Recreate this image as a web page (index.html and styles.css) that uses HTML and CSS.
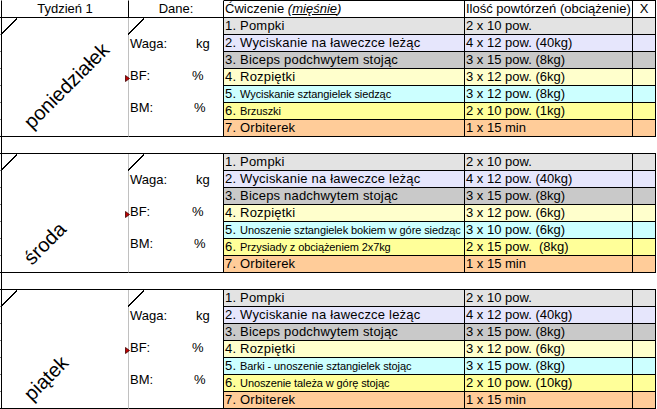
FILE: index.html
```html
<!DOCTYPE html>
<html lang="pl">
<head>
<meta charset="utf-8">
<title>Tydzień 1</title>
<link rel="stylesheet" href="styles.css">
</head>
<body>
<div class="sheet">
  <!-- header -->
  <div class="a a-end"></div>
  <div class="h h-week">Tydzień 1</div>
  <div class="h h-data">Dane:</div>
  <div class="h h-ex">Ćwiczenie <i>(<u>mięśnie</u>)</i></div>
  <div class="h h-reps">Ilość powtórzeń (obciążenie)</div>
  <div class="h h-x">X</div>
  <div class="z"></div>

  <!-- poniedziałek -->
  <div class="a"></div>
  <div class="week">
    <svg class="diag" width="17" height="17" viewBox="0 0 17 17"><line x1="0" y1="16.5" x2="16" y2="0.5" stroke="#000" stroke-width="1"/></svg>
    <span class="day">poniedziałek</span>
  </div>
  <div class="data">
    <svg class="diag" width="17" height="17" viewBox="0 0 17 17"><line x1="0" y1="16.5" x2="16" y2="0.5" stroke="#000" stroke-width="1"/></svg>
    <div class="line"><span class="lbl lbl-kg">Waga:</span><span>kg</span></div>
    <div class="line"><svg class="marker" width="5" height="7" viewBox="0 0 5 7"><path d="M0.5 0.5 L4.5 3.5 L0.5 6.5 Z" fill="#c00000" stroke="#400000" stroke-width="0.8"/></svg><span class="lbl lbl-bf">BF:</span><span>%</span></div>
    <div class="line"><span class="lbl lbl-bm">BM:</span><span>%</span></div>
  </div>
  <div class="c ex r1">1. Pompki</div><div class="c reps r1">2 x 10 pow.</div><div class="c x r1"></div><div class="z"></div>
  <div class="a"></div><div class="c ex r2">2. Wyciskanie na ławeczce leżąc</div><div class="c reps r2">4 x 12 pow. (40kg)</div><div class="c x r2"></div><div class="z"></div>
  <div class="a"></div><div class="c ex r3">3. Biceps podchwytem stojąc</div><div class="c reps r3">3 x 15 pow. (8kg)</div><div class="c x r3"></div><div class="z"></div>
  <div class="a"></div><div class="c ex r4">4. Rozpiętki</div><div class="c reps r4">3 x 12 pow. (6kg)</div><div class="c x r4"></div><div class="z"></div>
  <div class="a"></div><div class="c ex r5">5. <span class="sm">Wyciskanie sztangielek siedząc</span></div><div class="c reps r5">3 x 12 pow. (8kg)</div><div class="c x r5"></div><div class="z"></div>
  <div class="a"></div><div class="c ex r6">6. <span class="sm">Brzuszki</span></div><div class="c reps r6">2 x 10 pow. (1kg)</div><div class="c x r6"></div><div class="z"></div>
  <div class="a a-end"></div><div class="c ex r7">7. Orbiterek</div><div class="c reps r7">1 x 15 min</div><div class="c x r7"></div><div class="z"></div>

  <div class="a a-end"></div><div class="gap"></div><div class="z"></div>

  <!-- środa -->
  <div class="a"></div>
  <div class="week">
    <svg class="diag" width="17" height="17" viewBox="0 0 17 17"><line x1="0" y1="16.5" x2="16" y2="0.5" stroke="#000" stroke-width="1"/></svg>
    <span class="day">środa</span>
  </div>
  <div class="data">
    <svg class="diag" width="17" height="17" viewBox="0 0 17 17"><line x1="0" y1="16.5" x2="16" y2="0.5" stroke="#000" stroke-width="1"/></svg>
    <div class="line"><span class="lbl lbl-kg">Waga:</span><span>kg</span></div>
    <div class="line"><svg class="marker" width="5" height="7" viewBox="0 0 5 7"><path d="M0.5 0.5 L4.5 3.5 L0.5 6.5 Z" fill="#c00000" stroke="#400000" stroke-width="0.8"/></svg><span class="lbl lbl-bf">BF:</span><span>%</span></div>
    <div class="line"><span class="lbl lbl-bm">BM:</span><span>%</span></div>
  </div>
  <div class="c ex r1">1. Pompki</div><div class="c reps r1">2 x 10 pow.</div><div class="c x r1"></div><div class="z"></div>
  <div class="a"></div><div class="c ex r2">2. Wyciskanie na ławeczce leżąc</div><div class="c reps r2">4 x 12 pow. (40kg)</div><div class="c x r2"></div><div class="z"></div>
  <div class="a"></div><div class="c ex r3">3. Biceps nadchwytem stojąc</div><div class="c reps r3">3 x 15 pow. (8kg)</div><div class="c x r3"></div><div class="z"></div>
  <div class="a"></div><div class="c ex r4">4. Rozpiętki</div><div class="c reps r4">3 x 12 pow. (6kg)</div><div class="c x r4"></div><div class="z"></div>
  <div class="a"></div><div class="c ex r5">5. <span class="sm">Unoszenie sztangielek bokiem w góre siedząc</span></div><div class="c reps r5">3 x 10 pow. (6kg)</div><div class="c x r5"></div><div class="z"></div>
  <div class="a"></div><div class="c ex r6">6. <span class="sm">Przysiady z obciążeniem 2x7kg</span></div><div class="c reps r6">2 x 15 pow.  (8kg)</div><div class="c x r6"></div><div class="z"></div>
  <div class="a a-end"></div><div class="c ex r7">7. Orbiterek</div><div class="c reps r7">1 x 15 min</div><div class="c x r7"></div><div class="z"></div>

  <div class="a a-end"></div><div class="gap"></div><div class="z"></div>

  <!-- piątek -->
  <div class="a"></div>
  <div class="week">
    <svg class="diag" width="17" height="17" viewBox="0 0 17 17"><line x1="0" y1="16.5" x2="16" y2="0.5" stroke="#000" stroke-width="1"/></svg>
    <span class="day">piątek</span>
  </div>
  <div class="data">
    <svg class="diag" width="17" height="17" viewBox="0 0 17 17"><line x1="0" y1="16.5" x2="16" y2="0.5" stroke="#000" stroke-width="1"/></svg>
    <div class="line"><span class="lbl lbl-kg">Waga:</span><span>kg</span></div>
    <div class="line"><svg class="marker" width="5" height="7" viewBox="0 0 5 7"><path d="M0.5 0.5 L4.5 3.5 L0.5 6.5 Z" fill="#c00000" stroke="#400000" stroke-width="0.8"/></svg><span class="lbl lbl-bf">BF:</span><span>%</span></div>
    <div class="line"><span class="lbl lbl-bm">BM:</span><span>%</span></div>
  </div>
  <div class="c ex r1">1. Pompki</div><div class="c reps r1">2 x 10 pow.</div><div class="c x r1"></div><div class="z"></div>
  <div class="a"></div><div class="c ex r2">2. Wyciskanie na ławeczce leżąc</div><div class="c reps r2">4 x 12 pow. (40kg)</div><div class="c x r2"></div><div class="z"></div>
  <div class="a"></div><div class="c ex r3">3. Biceps podchwytem stojąc</div><div class="c reps r3">3 x 15 pow. (8kg)</div><div class="c x r3"></div><div class="z"></div>
  <div class="a"></div><div class="c ex r4">4. Rozpiętki</div><div class="c reps r4">3 x 12 pow. (6kg)</div><div class="c x r4"></div><div class="z"></div>
  <div class="a"></div><div class="c ex r5">5. <span class="sm">Barki - unoszenie sztangielek stojąc</span></div><div class="c reps r5">3 x 15 pow. (8kg)</div><div class="c x r5"></div><div class="z"></div>
  <div class="a"></div><div class="c ex r6">6. <span class="sm">Unoszenie tależa w górę stojąc</span></div><div class="c reps r6">2 x 10 pow. (10kg)</div><div class="c x r6"></div><div class="z"></div>
  <div class="a a-end"></div><div class="c ex r7">7. Orbiterek</div><div class="c reps r7">1 x 15 min</div><div class="c x r7"></div><div class="z"></div>
</div>
</body>
</html>
```

FILE: styles.css
```css
* {
  box-sizing: border-box;
  margin: 0;
  padding: 0;
}

html, body {
  background: #fff;
}

body {
  margin: 0;
  font-family: "Liberation Sans", Arial, sans-serif;
  font-size: 13px;
  line-height: 16px;
  color: #000;
}

.sheet {
  display: grid;
  grid-template-columns: 1px 128px 95px 241px 168px 23px 1px;
  grid-template-rows: 18px;
  grid-auto-rows: 17px;
  width: 657px;
}

/* leftmost sliver column with row gridlines */
.a {
  grid-column: 1;
  border-bottom: 1px solid #808080;
}
.a-end {
  border-bottom-color: #000;
}

.z {
  grid-column: 7;
}

/* header */
.h {
  border-top: 1px solid #fff;
  border-bottom: 1px solid #000;
  border-right: 1px solid #000;
  white-space: nowrap;
}
.h-week {
  grid-column: 2;
  border-left: 1px solid #000;
  text-align: center;
}
.h-data {
  grid-column: 3;
  text-align: center;
}
.h-ex {
  grid-column: 4;
  border-top-color: #000;
  padding-left: 1px;
}
.h-reps {
  grid-column: 5;
  border-top-color: #000;
  padding-left: 1px;
}
.h-x {
  grid-column: 6;
  border-top-color: #000;
  text-align: center;
}

/* merged day cell */
.week {
  grid-column: 2;
  grid-row: span 7;
  position: relative;
  display: flex;
  align-items: flex-end;
  padding: 0 0 4px 32px;
  border-left: 1px solid #000;
  border-right: 1px solid #c0c0c0;
  border-bottom: 1px solid #000;
}
.day {
  display: block;
  font-size: 20px;
  line-height: 20px;
  white-space: nowrap;
  transform-origin: 0 100%;
  transform: rotate(-45deg);
}

/* merged data cell */
.data {
  grid-column: 3;
  grid-row: span 7;
  position: relative;
  display: flex;
  flex-direction: column;
  gap: 16px;
  padding: 18px 0 0 1px;
  border-right: 1px solid #000;
  border-bottom: 1px solid #000;
}
.line {
  position: relative;
  display: flex;
  height: 16px;
  white-space: nowrap;
}
.lbl-kg { width: 66px; }
.lbl-bf { width: 62px; }
.lbl-bm { width: 64px; }

.diag {
  position: absolute;
  left: -1px;
  top: 0;
  shape-rendering: crispEdges;
}
.marker {
  position: absolute;
  left: -5px;
  top: 7px;
}

/* exercise rows */
.c {
  white-space: pre;
  overflow: visible;
  border-right: 1px solid #000;
  border-bottom: 1px solid #000;
}
.ex {
  grid-column: 4;
  padding-left: 1px;
  letter-spacing: 0.2px;
}
.reps {
  grid-column: 5;
  padding-left: 1px;
}
.x {
  grid-column: 6;
}
.sm {
  font-size: 11px;
  letter-spacing: -0.1px;
}

.r1 { background: #e3e3e3; }
.r2 { background: #e6e6fc; }
.r3 { background: #c9c9c9; }
.r4 { background: #ffffcc; }
.r5 { background: #ccffff; }
.r6 { background: #ffff99; }
.r7 { background: #ffcc99; }

/* empty separator row */
.gap {
  grid-column: 2 / 7;
  border-left: 1px solid #000;
  border-bottom: 1px solid #000;
}
```
